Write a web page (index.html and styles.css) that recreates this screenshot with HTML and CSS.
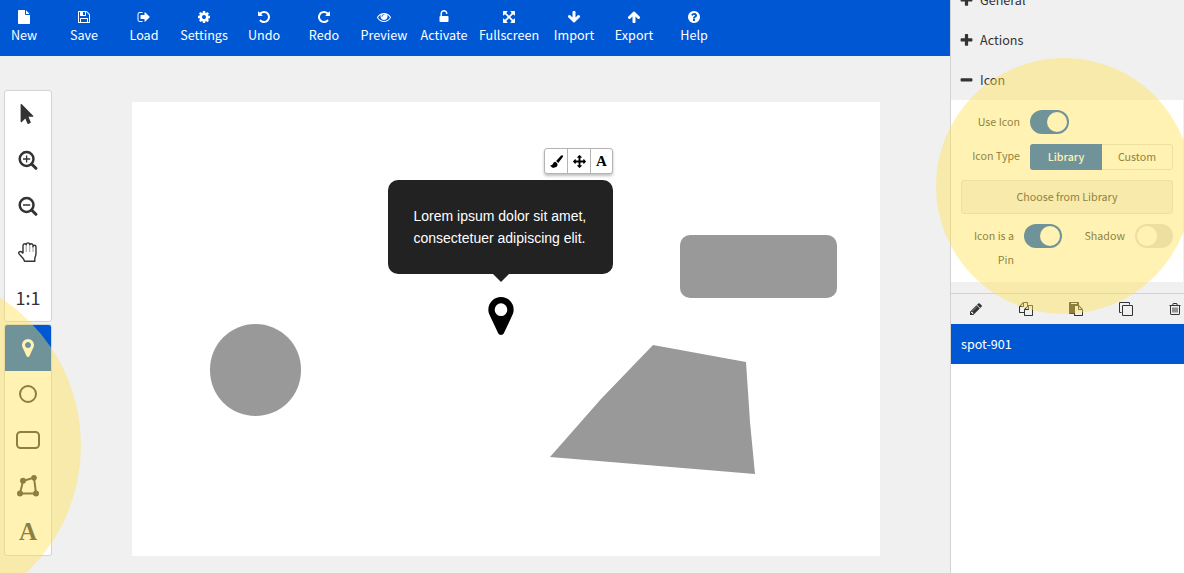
FILE: index.html
```html
<!DOCTYPE html>
<html lang="en">
<head>
<meta charset="utf-8">
<title>Hotspot editor</title>
<link rel="stylesheet" href="styles.css">
</head>
<body>
<svg class="defs" aria-hidden="true">
  <symbol id="undo" viewBox="0 0 1792 1792"><path d="M1664 896q0 156-61 298t-164 245-245 164-298 61q-172 0-327-72.5t-264-204.5q-7-10-6.5-22.5t8.5-20.5l137-138q10-9 25-9 16 2 23 12 73 95 179 147t225 52q104 0 198.5-40.5t163.5-109.5 109.5-163.5 40.5-198.5-40.5-198.5-109.5-163.5-163.5-109.5-198.5-40.5q-98 0-188 35.5t-160 101.5l137 138q31 30 14 69-17 40-59 40h-448q-26 0-45-19t-19-45v-448q0-42 40-59 39-17 69 14l130 129q107-101 244.5-156.5t284.5-55.5q156 0 298 61t245 164 164 245 61 298z"/></symbol>
  <symbol id="arrow" viewBox="0 0 1792 1792"><path d="M1675 832q0 53-37 90l-651 652q-39 37-91 37-53 0-90-37l-651-652q-38-36-38-90 0-53 38-91l74-75q39-37 91-37 53 0 90 37l294 294v-704q0-52 38-90t90-38h128q52 0 90 38t38 90v704l294-294q37-37 90-37 52 0 91 37l75 75q37 39 37 91z"/></symbol>
  <symbol id="marker" viewBox="384 128 1024 1536"><path d="M1152 640q0-106-75-181t-181-75-181 75-75 181 75 181 181 75 181-75 75-181zm256 0q0 109-33 179l-364 774q-16 33-47.5 52t-67.5 19-67.5-19-46.5-52l-365-774q-33-70-33-179 0-212 150-362t362-150 362 150 150 362z"/></symbol>
  <symbol id="plus" viewBox="0 0 1792 1792"><path d="M1600 736v192q0 40-28 68t-68 28h-416v416q0 40-28 68t-68 28h-192q-40 0-68-28t-28-68v-416h-416q-40 0-68-28t-28-68v-192q0-40 28-68t68-28h416v-416q0-40 28-68t68-28h192q40 0 68 28t28 68v416h416q40 0 68 28t28 68z"/></symbol>
</svg>

<div class="main">
  <nav class="toolbar">
    <button class="action"><svg class="icon" viewBox="0 0 1792 1792"><path d="M1152 512v-472q22 14 36 28l408 408q14 14 28 36h-472zm-128 32q0 40 28 68t68 28h544v1056q0 40-28 68t-68 28h-1344q-40 0-68-28t-28-68v-1600q0-40 28-68t68-28h800v544z"/></svg><span>New</span></button>
    <button class="action"><svg class="icon" viewBox="0 0 1792 1792"><path d="M512 1536h768v-384h-768v384zm896 0h128v-896q0-14-10-38.5t-20-34.5l-281-281q-10-10-34-20t-39-10v416q0 40-28 68t-68 28h-576q-40 0-68-28t-28-68v-416h-128v1280h128v-416q0-40 28-68t68-28h832q40 0 68 28t28 68v416zm-384-928v-320q0-13-9.5-22.5t-22.5-9.5h-192q-13 0-22.5 9.5t-9.5 22.5v320q0 13 9.5 22.5t22.5 9.5h192q13 0 22.5-9.5t9.5-22.5zm640 32v928q0 40-28 68t-68 28h-1344q-40 0-68-28t-28-68v-1344q0-40 28-68t68-28h928q40 0 88 20t76 48l280 280q28 28 48 76t20 88z"/></svg><span>Save</span></button>
    <button class="action"><svg class="icon" viewBox="0 0 1792 1792"><path d="M704 1440q0 4 1 20t.5 26.500-3 23.500-10 19.500-20.500 6.500h-320q-119 0-203.500-84.500t-84.500-203.500v-704q0-119 84.500-203.500t203.500-84.500h320q13 0 22.500 9.500t9.500 22.500q0 4 1 20t.5 26.500-3 23.500-10 19.500-20.500 6.500h-320q-66 0-113 47t-47 113v704q0 66 47 113t113 47h312l11.500 1 11.500 3 8 5.500 7 9 2 13.500zm928-544q0 26-19 45l-544 544q-19 19-45 19t-45-19-19-45v-288h-448q-26 0-45-19t-19-45v-384q0-26 19-45t45-19h448v-288q0-26 19-45t45-19 45 19l544 544q19 19 19 45z"/></svg><span>Load</span></button>
    <button class="action"><svg class="icon" viewBox="0 0 1792 1792"><path d="M1152 896q0-106-75-181t-181-75-181 75-75 181 75 181 181 75 181-75 75-181zm512-109v222q0 12-8 23t-20 13l-185 28q-19 54-39 91 35 50 107 138 10 12 10 25t-9 23q-27 37-99 108t-94 71q-12 0-26-9l-138-108q-44 23-91 38-16 136-29 186-7 28-36 28h-222q-14 0-24.500-8.500t-11.500-21.500l-28-184q-49-16-90-37l-141 107q-10 9-25 9-14 0-25-11-126-114-165-168-7-10-7-23 0-12 8-23 15-21 51-66.500t54-70.500q-27-50-41-99l-183-27q-13-2-21-12.500t-8-23.500v-222q0-12 8-23t19-13l186-28q14-46 39-92-40-57-107-138-10-12-10-24 0-10 9-23 26-36 98.500-107.500t94.500-71.500q13 0 26 10l138 107q44-23 91-38 16-136 29-186 7-28 36-28h222q14 0 24.500 8.500t11.500 21.500l28 184q49 16 90 37l142-107q9-9 24-9 13 0 25 10 129 119 165 170 7 8 7 22 0 12-8 23-15 21-51 66.500t-54 70.500q26 50 41 98l183 28q13 2 21 12.500t8 23.500z"/></svg><span>Settings</span></button>
    <button class="action"><svg class="icon"><use href="#undo"/></svg><span>Undo</span></button>
    <button class="action"><svg class="icon mirrored"><use href="#undo"/></svg><span>Redo</span></button>
    <button class="action"><svg class="icon" viewBox="0 0 1792 1792"><path d="M1664 960q-152-236-381-353 61 104 61 225 0 185-131.500 316.500t-316.500 131.500-316.500-131.500-131.500-316.500q0-121 61-225-229 117-381 353 133 205 333.500 326.500t434.500 121.500 434.500-121.500 333.500-326.500zm-720-384q0-20-14-34t-34-14q-125 0-214.500 89.500t-89.500 214.500q0 20 14 34t34 14 34-14 14-34q0-86 61-147t147-61q20 0 34-14t14-34zm848 384q0 34-20 69-140 230-376.500 368.500t-499.500 138.500-499.500-139-376.500-368q-20-35-20-69t20-69q140-229 376.500-368t499.500-139 499.500 139 376.500 368q20 35 20 69z"/></svg><span>Preview</span></button>
    <button class="action"><svg class="icon" viewBox="0 0 1792 1792"><path d="M1376 768q40 0 68 28t28 68v576q0 40-28 68t-68 28h-960q-40 0-68-28t-28-68v-576q0-40 28-68t68-28h32v-320q0-185 131.500-316.500t316.500-131.500 316.500 131.500 131.500 316.500q0 26-19 45t-45 19h-64q-26 0-45-19t-19-45q0-106-75-181t-181-75-181 75-75 181v320h736z"/></svg><span>Activate</span></button>
    <button class="action wide"><svg class="icon" viewBox="-128 -128 1792 1792"><path d="M1283 413l-355 355 355 355 144-144q29-31 70-14 39 17 39 59v448q0 26-19 45t-45 19h-448q-42 0-59-40-17-39 14-69l144-144-355-355-355 355 144 144q31 30 14 69-17 40-59 40h-448q-26 0-45-19t-19-45v-448q0-42 40-59 39-17 69 14l144 144 355-355-355-355-144 144q-19 19-45 19-12 0-24-5-40-17-40-59v-448q0-26 19-45t45-19h448q42 0 59 40 17 39-14 69l-144 144 355 355 355-355-144-144q-31-30-14-69 17-40 59-40h448q26 0 45 19t19 45v448q0 42-39 59-13 5-25 5-26 0-45-19z"/></svg><span>Fullscreen</span></button>
    <button class="action"><svg class="icon"><use href="#arrow"/></svg><span>Import</span></button>
    <button class="action"><svg class="icon flipped"><use href="#arrow"/></svg><span>Export</span></button>
    <button class="action"><svg class="icon" viewBox="0 0 1792 1792"><path d="M1024 1376v-192q0-14-9-23t-23-9h-192q-14 0-23 9t-9 23v192q0 14 9 23t23 9h192q14 0 23-9t9-23zm256-672q0-88-55.500-163t-138.500-116-170-41q-243 0-371 213-15 24 8 42l132 100q7 6 19 6 16 0 25-12 53-68 86-92 34-24 86-24 48 0 85.500 26t37.500 59q0 38-20 61t-68 45q-63 28-115.500 86.500t-52.500 125.500v36q0 14 9 23t23 9h192q14 0 23-9t9-23q0-19 21.500-49.500t54.500-49.500q32-18 49-28.500t46-35 44.500-48 28-60.500 12.500-81zm384 192q0 209-103 385.500t-279.500 279.500-385.500 103-385.500-103-279.500-279.500-103-385.500 103-385.500 279.500-279.500 385.500-103 385.500 103 279.500 279.500 103 385.500z"/></svg><span>Help</span></button>
  </nav>

  <div class="workspace">
    <div class="tools">
      <div class="tool-group">
        <button class="tool"><svg width="22" height="20" viewBox="-70 0 1984 1792"><path d="M1389 1043q31 30 14 69-17 40-59 40h-382l201 476q10 25 0 49t-34 35l-177 75q-25 10-49 0t-35-34l-191-452-312 312q-19 19-45 19-12 0-24-5-40-17-40-59v-1504q0-42 40-59 12-5 24-5 27 0 45 19z"/></svg></button>
        <button class="tool"><svg class="outline" width="20" height="20" viewBox="0 0 20 20"><circle cx="8.600" cy="9" r="6.900" stroke-width="2.500"/><path d="M13.600 14l4.300 4.300" stroke-width="3" stroke-linecap="round"/><path d="M5 9h7.200M8.600 5.400v7.200" stroke-width="1.300"/></svg></button>
        <button class="tool"><svg class="outline" width="20" height="20" viewBox="0 0 20 20"><circle cx="8.600" cy="9" r="6.900" stroke-width="2.500"/><path d="M13.600 14l4.300 4.300" stroke-width="3" stroke-linecap="round"/><path d="M5 9h7.200" stroke-width="1.300"/></svg></button>
        <button class="tool"><svg class="outline" width="20" height="20" viewBox="0 0 20 20" stroke-width="1.400" stroke-linejoin="round"><path d="M6.500 19.200h10.300v-3.100q1.200-2.800 1.200-5V5q0-1.700-1.400-1.700T15 4.900V3.500q0-1.800-1.600-1.800-1.300 0-1.700 1Q11.500.9 10 .9T8.200 2.700Q7.700 1.800 6.700 1.800 5 1.800 5 3.600v7.500L3.500 9.900Q2.200 9 1.200 10T1.200 12.100L5.600 17z"/><path d="M8.200 3v7M11.700 3v7M15 4.500V10" stroke-width=".8" stroke="#888"/></svg></button>
        <button class="tool ratio">1:1</button>
      </div>
      <div class="tool-group">
        <button class="tool active"><svg width="12" height="18"><use href="#marker"/></svg></button>
        <button class="tool"><svg class="outline" width="18" height="18" viewBox="0 0 18 18" stroke-width="2"><circle cx="9" cy="9" r="8"/></svg></button>
        <button class="tool"><svg class="outline" width="24" height="18" viewBox="0 0 24 18" stroke-width="2"><rect x="1" y="1" width="22" height="16" rx="3.500"/></svg></button>
        <button class="tool"><svg width="22" height="22" viewBox="0 0 22 22"><path d="M3 18.500L6 6l11-3.500 2 16z" fill="none" stroke="currentColor" stroke-width="2"/><circle cx="3" cy="18.500" r="3"/><circle cx="6" cy="5.700" r="3"/><circle cx="17" cy="2.800" r="2.800"/><circle cx="19" cy="18.500" r="3"/></svg></button>
        <button class="tool letter">A</button>
      </div>
    </div>

    <div class="canvas">
      <svg class="shapes" viewBox="0 0 748 454">
        <rect x="78" y="222" width="91" height="92" rx="45.500"/>
        <rect x="548" y="133" width="157" height="63" rx="10"/>
        <path d="M521 243l93 17 4 60 5 52-205-17 51-58z"/>
      </svg>
      <div class="mini-bar">
        <span class="mini"><svg width="13" height="13" viewBox="0 0 13 13"><path d="M12.600.3q.8.700 0 2L8.300 8 6.100 6.100 10.900.8Q12-.2 12.600.3zM5.400 6.800l2.100 1.900q.4 3.800-3.600 4Q1 12.700.3 9.900q1.300.8 2.200-.4Q3.600 6.500 5.400 6.800z"/></svg></span>
        <span class="mini"><svg width="13" height="13" viewBox="0 0 1792 1792"><path d="M1792 896q0 26-19 45l-256 256q-19 19-45 19t-45-19-19-45v-128h-384v384h128q26 0 45 19t19 45-19 45l-256 256q-19 19-45 19t-45-19l-256-256q-19-19-19-45t19-45 45-19h128v-384h-384v128q0 26-19 45t-45 19-45-19l-256-256q-19-19-19-45t19-45l256-256q19-19 45-19t45 19 19 45v128h384v-384h-128q-26 0-45-19t-19-45 19-45l256-256q19-19 45-19t45 19l256 256q19 19 19 45t-19 45-45 19h-128v384h384v-128q0-26 19-45t45-19 45 19l256 256q19 19 19 45z"/></svg></span>
        <span class="mini mini-letter">A</span>
      </div>
      <div class="callout">Lorem ipsum dolor sit amet,<br>consectetuer adipiscing elit.</div>
      <svg class="pin"><use href="#marker"/></svg>
    </div>
  </div>
</div>

<aside class="sidebar">
  <div class="settings">
    <div class="section"><svg class="sign"><use href="#plus"/></svg>General</div>
    <div class="section"><svg class="sign"><use href="#plus"/></svg>Actions</div>
    <div class="section"><svg class="sign" viewBox="0 0 1792 1792"><rect x="192" y="640" width="1408" height="384" rx="96"/></svg>Icon</div>
    <div class="form">
      <div class="field"><label>Use Icon</label><span class="toggle on wide-toggle"></span></div>
      <div class="field"><label>Icon Type</label><div class="segments"><span class="segment selected">Library</span><span class="segment">Custom</span></div></div>
      <button class="choose">Choose from Library</button>
      <div class="pair">
        <label class="pin-label">Icon is a<br>Pin</label><span class="toggle on"></span>
        <label class="shadow-label">Shadow</label><span class="toggle"></span>
      </div>
    </div>
  </div>
  <div class="layer-actions">
    <span><svg class="icon" viewBox="0 0 1792 1792"><path d="M491 1536l91-91-235-235-91 91v107h128v128h107zm523-928q0-22-22-22-10 0-17 7l-542 542q-7 7-7 17 0 22 22 22 10 0 17-7l542-542q7-7 7-17zm-54-192l416 416-832 832h-416v-416zm683 96q0 53-37 90l-166 166-416-416 166-165q36-38 90-38 53 0 91 38l235 234q37 39 37 91z"/></svg></span>
    <span><svg class="icon" viewBox="0 0 1792 1792"><path d="M1696 384q40 0 68 28t28 68v1216q0 40-28 68t-68 28h-960q-40 0-68-28t-28-68v-288h-544q-40 0-68-28t-28-68v-672q0-40 20-88t48-76l408-408q28-28 76-48t88-20h416q40 0 68 28t28 68v328q68-40 128-40h416zm-544 213l-299 299h299v-299zm-640-384l-299 299h299v-299zm196 647l316-316v-416h-384v416q0 40-28 68t-68 28h-416v640h512v-256q0-40 20-88t48-76zm956 804v-1152h-384v416q0 40-28 68t-68 28h-416v640h896z"/></svg></span>
    <span><svg class="icon" viewBox="0 0 1792 1792"><path d="M768 1664h896v-640h-416q-40 0-68-28t-28-68v-416h-384v1152zm256-1440v-64q0-13-9.500-22.500t-22.500-9.500h-704q-13 0-22.500 9.500t-9.500 22.500v64q0 13 9.500 22.500t22.500 9.500h704q13 0 22.500-9.500t9.500-22.500zm256 672h299l-299-299v299zm512 128v672q0 40-28 68t-68 28h-960q-40 0-68-28t-28-68v-160h-544q-40 0-68-28t-28-68v-1344q0-40 28-68t68-28h1088q40 0 68 28t28 68v328q21 13 36 28l408 408q28 28 48 76t20 88z"/></svg></span>
    <span><svg class="icon" viewBox="0 0 1792 1792"><path d="M1664 1632v-1088q0-13-9.500-22.500t-22.500-9.500h-1088q-13 0-22.500 9.500t-9.500 22.500v1088q0 13 9.500 22.500t22.500 9.500h1088q13 0 22.500-9.500t9.500-22.500zm128-1088v1088q0 66-47 113t-113 47h-1088q-66 0-113-47t-47-113v-1088q0-66 47-113t113-47h1088q66 0 113 47t47 113zm-384-384v160h-128v-160q0-13-9.500-22.500t-22.500-9.500h-1088q-13 0-22.500 9.500t-9.500 22.500v1088q0 13 9.500 22.500t22.500 9.500h160v128h-160q-66 0-113-47t-47-113v-1088q0-66 47-113t113-47h1088q66 0 113 47t47 113z"/></svg></span>
    <span><svg class="icon" viewBox="0 0 1792 1792"><path d="M576 704h128v640h-128zM832 704h128v640h-128zM1088 704h128v640h-128z"/><path fill-rule="evenodd" d="M1408 1376v-948h-1024v948q0 22 7 40.500t14.500 27 10.500 8.500h960q3 0 10.500-8.500t14.500-27 7-40.500zm-736-1076h448l-48-117q-7-9-17-11h-317q-10 2-17 11zm928 32v64q0 14-9 23t-23 9h-32v948q0 83-47 143.500t-113 60.500h-960q-66 0-113-58.500t-47-141.500v-952h-32q-14 0-23-9t-9-23v-64q0-14 9-23t23-9h309l70-167q15-37 54-63t79-26h320q40 0 79 26t54 63l70 167h309q14 0 23 9t9 23z" transform="translate(0 80)"/></svg></span>
  </div>
  <div class="layer">spot-901</div>
</aside>
<div class="spotlight spotlight-left"></div>
<div class="spotlight spotlight-right"></div>
</body>
</html>
```
FILE: styles.css
```css
* { box-sizing: border-box; }
html { overflow: hidden; }
body {
  position: relative;
  margin: 0;
  width: 1184px;
  height: 573px;
  display: flex;
  overflow: hidden;
  background: #f0f0f0;
  color: #333;
  font: 12.6px/20px "Noto Sans CJK SC", "Noto Sans", sans-serif;
}
svg { display: block; fill: currentColor; flex: none; }
.outline { fill: none; stroke: currentColor; }
button { border: 0; padding: 0; margin: 0; background: none; color: inherit; font: inherit; }
.defs { position: absolute; width: 0; height: 0; }
.icon { width: 14px; height: 14px; }
.mirrored { transform: scaleX(-1); }
.flipped { transform: scaleY(-1); }

.main { width: 950px; display: flex; flex-direction: column; }
.toolbar { height: 56px; background: #0057d3; color: #fff; display: flex; }
.action {
  width: 60px;
  flex: none;
  display: flex;
  flex-direction: column;
  align-items: center;
  padding-top: 10px;
  gap: 1px;
  white-space: nowrap;
}
.action:first-child { margin-left: -6px; }
.wide { width: 70px; }

.workspace { flex: 1; display: flex; gap: 80px; }
.tools { width: 48px; margin: 34px 0 0 4px; display: flex; flex-direction: column; gap: 2px; }
.tool-group {
  border: 1px solid #d3d3d3;
  border-radius: 3px;
  background: #fff;
  overflow: hidden;
}
.tool { width: 46px; height: 46px; display: flex; align-items: center; justify-content: center; }
.active { background: #0057d3; color: #fff; }
.ratio { font-size: 18px; padding-bottom: 2px; }
.letter { font: bold 25px "Liberation Serif", serif; }

.canvas { position: relative; width: 748px; height: 454px; margin-top: 46px; background: #fff; }
.shapes { width: 748px; height: 454px; fill: #999; }
.mini-bar {
  position: absolute;
  left: 412px;
  top: 46px;
  width: 69px;
  height: 26px;
  display: flex;
  color: #000;
  background: #fff;
  border: 1px solid #b4b4b4;
  border-radius: 3px;
  box-shadow: 0 2px 3px rgba(0, 0, 0, .25);
}
.mini { width: 23px; flex: none; display: flex; align-items: center; justify-content: center; }
.mini:first-child { width: 22px; }
.mini:last-child { width: 22px; }
.mini + .mini { border-left: 1px solid #b4b4b4; }
.mini-letter { font: bold 15px "Liberation Serif", serif; }
.callout {
  position: absolute;
  left: 256px;
  top: 78px;
  width: 225px;
  height: 94px;
  padding: 25px 25px 25px 25.5px;
  border-radius: 10px;
  background: #222;
  color: #fff;
  font: 14px/22px "Liberation Sans", Arial, sans-serif;
  white-space: nowrap;
}
.callout::after {
  content: "";
  position: absolute;
  left: 105px;
  top: 94px;
  border: 8px solid transparent;
  border-top-color: #222;
  border-bottom: 0;
}
.pin { position: absolute; left: 356px; top: 195px; width: 26px; height: 38px; color: #000; }

.sidebar {
  width: 234px;
  border-left: 1px solid #d3d3d3;
  display: flex;
  flex-direction: column;
  background: #fff;
}
.settings {
  height: 294px;
  flex: none;
  overflow: hidden;
  background: #f0f0f0;
  border-bottom: 1px solid #d3d3d3;
}
.section { height: 40px; display: flex; align-items: center; padding-left: 8px; gap: 6px; }
.section:first-child { margin-top: -20px; }
.sign { width: 15px; height: 15px; }
.form {
  width: 232px;
  height: 182px;
  padding: 10px 10px 0;
  background: #fff;
  font-size: 10.7px;
  line-height: 24px;
  display: flex;
  flex-direction: column;
  gap: 10px;
}
.field { display: flex; gap: 10px; }
.field label { width: 59px; height: 24px; text-align: right; white-space: nowrap; }
.toggle {
  width: 38px;
  height: 24px;
  flex: none;
  padding: 2px;
  border-radius: 12px;
  background: #ddd;
}
.toggle::before { content: ""; display: block; width: 20px; height: 20px; border-radius: 50%; background: #fff; }
.on { background: #0057d3; }
.on::before { margin-left: auto; }
.wide-toggle { width: 39px; }
.segments {
  width: 143px;
  height: 26px;
  display: flex;
  border: 1px solid #ddd;
  border-radius: 3px;
}
.segment { flex: 1; text-align: center; }
.selected {
  flex: 0 0 72px;
  margin: -1px 0 -1px -1px;
  border-radius: 3px 0 0 3px;
  background: #0057d3;
  color: #fff;
  font-weight: 500;
  line-height: 26px;
}
.choose { height: 34px; border: 1px solid #ddd; border-radius: 3px; background: #f0f0f0; }
.pair { display: flex; }
.pin-label { width: 53px; margin-right: 10px; text-align: right; }
.shadow-label { width: 63px; margin-right: 10px; text-align: right; }
.layer-actions { height: 30px; display: flex; background: #f0f0f0; overflow: hidden; }
.layer-actions span { width: 50px; flex: none; display: flex; align-items: center; justify-content: center; }
.layer-actions span:last-child { width: 48px; }
.layer { height: 40px; padding-left: 10px; line-height: 40px; background: #0057d3; color: #fff; }

.spotlight {
  position: absolute;
  border-radius: 50%;
  background: rgba(255, 226, 80, .44);
  pointer-events: none;
}
.spotlight-left { left: -270px; top: 270px; width: 351px; height: 351px; }
.spotlight-right { left: 936px; top: 58px; width: 256px; height: 256px; }
```
